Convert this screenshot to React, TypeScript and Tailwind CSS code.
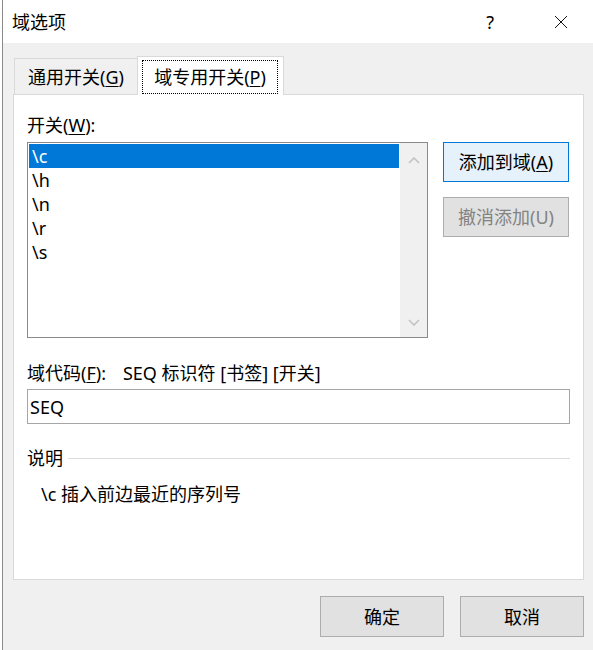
import React from "react";

const switches = ["\\c", "\\h", "\\n", "\\r", "\\s"];

const Chevron = ({ down = false }: { down?: boolean }) => (
  <svg width="12" height="7" viewBox="0 0 12 7" className="block">
    <polyline
      points={down ? "1,1 6,6 11,1" : "1,6 6,1 11,6"}
      fill="none"
      stroke="#c2c2c2"
      strokeWidth="1.6"
    />
  </svg>
);

export default function App() {
  return (
    <div className="flex h-[650px] w-[593px] overflow-hidden bg-white font-['Noto_Sans','Noto_Sans_CJK_SC',sans-serif] text-[18px] leading-[24px] text-black">
      <div className="w-[2px] bg-white" />
      <div className="w-px bg-[#8a8a8a]" />

      <div className="flex flex-1 flex-col">
        {/* title bar */}
        <div className="flex h-[43px] items-center bg-white pl-[9px]">
          <span>域选项</span>
          <span className="ml-auto">?</span>
          <svg width="14" height="14" viewBox="0 0 14 14" className="ml-[60px] mr-[25px]">
            <path d="M1 1 L13 13 M13 1 L1 13" stroke="#111" strokeWidth="1" fill="none" />
          </svg>
        </div>

        {/* body */}
        <div className="flex flex-1 flex-col bg-[#f0f0f0] pl-[10px] pr-[9px] pt-[13px]">
          {/* tabs */}
          <div className="flex items-end pl-px">
            <div className="flex h-[36px] w-[123px] items-center justify-center border-l border-t border-[#d9d9d9]">
              <span>
                通用开关(<span className="underline underline-offset-2">G</span>)
              </span>
            </div>
            <div className="relative z-10 -mb-px flex h-[39px] w-[147px] flex-col border border-b-0 border-[#d9d9d9] bg-white pl-[4px] pr-[5px] pt-[3px]">
              <div className="flex h-[34px] items-center justify-center border border-dotted border-black">
                <span>
                  域专用开关(<span className="underline underline-offset-2">P</span>)
                </span>
              </div>
            </div>
          </div>

          {/* panel */}
          <div className="flex h-[486px] flex-col border border-[#d9d9d9] bg-white pl-[13px] pr-[13px] pt-[18px]">
            <div>
              开关(<span className="underline underline-offset-2">W</span>):
            </div>

            <div className="mt-[5px] flex">
              <div className="flex h-[196px] w-[401px] border border-[#8a8a8a]">
                <div className="flex flex-1 flex-col p-px">
                  {switches.map((s, i) => (
                    <div
                      key={s}
                      className={`h-[24px] px-[3px] ${i === 0 ? "bg-[#0078d7] text-white" : ""}`}
                    >
                      {s}
                    </div>
                  ))}
                </div>
                <div className="flex w-[27px] flex-col items-center justify-between bg-[#f0f0f0] pb-[11px] pt-[14px]">
                  <Chevron />
                  <Chevron down />
                </div>
              </div>

              <div className="ml-[15px] flex flex-col gap-[15px]">
                <button className="h-[40px] w-[126px] border border-[#0078d7] bg-[#e5f1fb]">
                  添加到域(<span className="underline underline-offset-2">A</span>)
                </button>
                <button className="h-[40px] w-[126px] border border-[#adadad] bg-[#e1e1e1] text-[#838383]">
                  撤消添加(U)
                </button>
              </div>
            </div>

            <div className="mt-[23px] flex">
              <span>
                域代码(<span className="underline underline-offset-2">F</span>):
              </span>
              <span className="ml-[17px]">SEQ 标识符 [书签] [开关]</span>
            </div>

            <div className="mt-[4px] flex h-[35px] w-full items-center border border-[#a6a6a6] px-[2px]">
              SEQ
            </div>

            <div className="mt-[22px] flex items-center">
              <span>说明</span>
              <div className="ml-[5px] h-px flex-1 bg-[#dcdcdc]" />
            </div>

            <div className="mt-[12px] pl-[14px]">\c 插入前边最近的序列号</div>
          </div>

          {/* footer */}
          <div className="mt-[16px] flex justify-end gap-[16px]">
            <button className="h-[41px] w-[124px] border border-[#adadad] bg-[#e1e1e1]">确定</button>
            <button className="h-[41px] w-[124px] border border-[#adadad] bg-[#e1e1e1]">取消</button>
          </div>
        </div>
      </div>
    </div>
  );
}
